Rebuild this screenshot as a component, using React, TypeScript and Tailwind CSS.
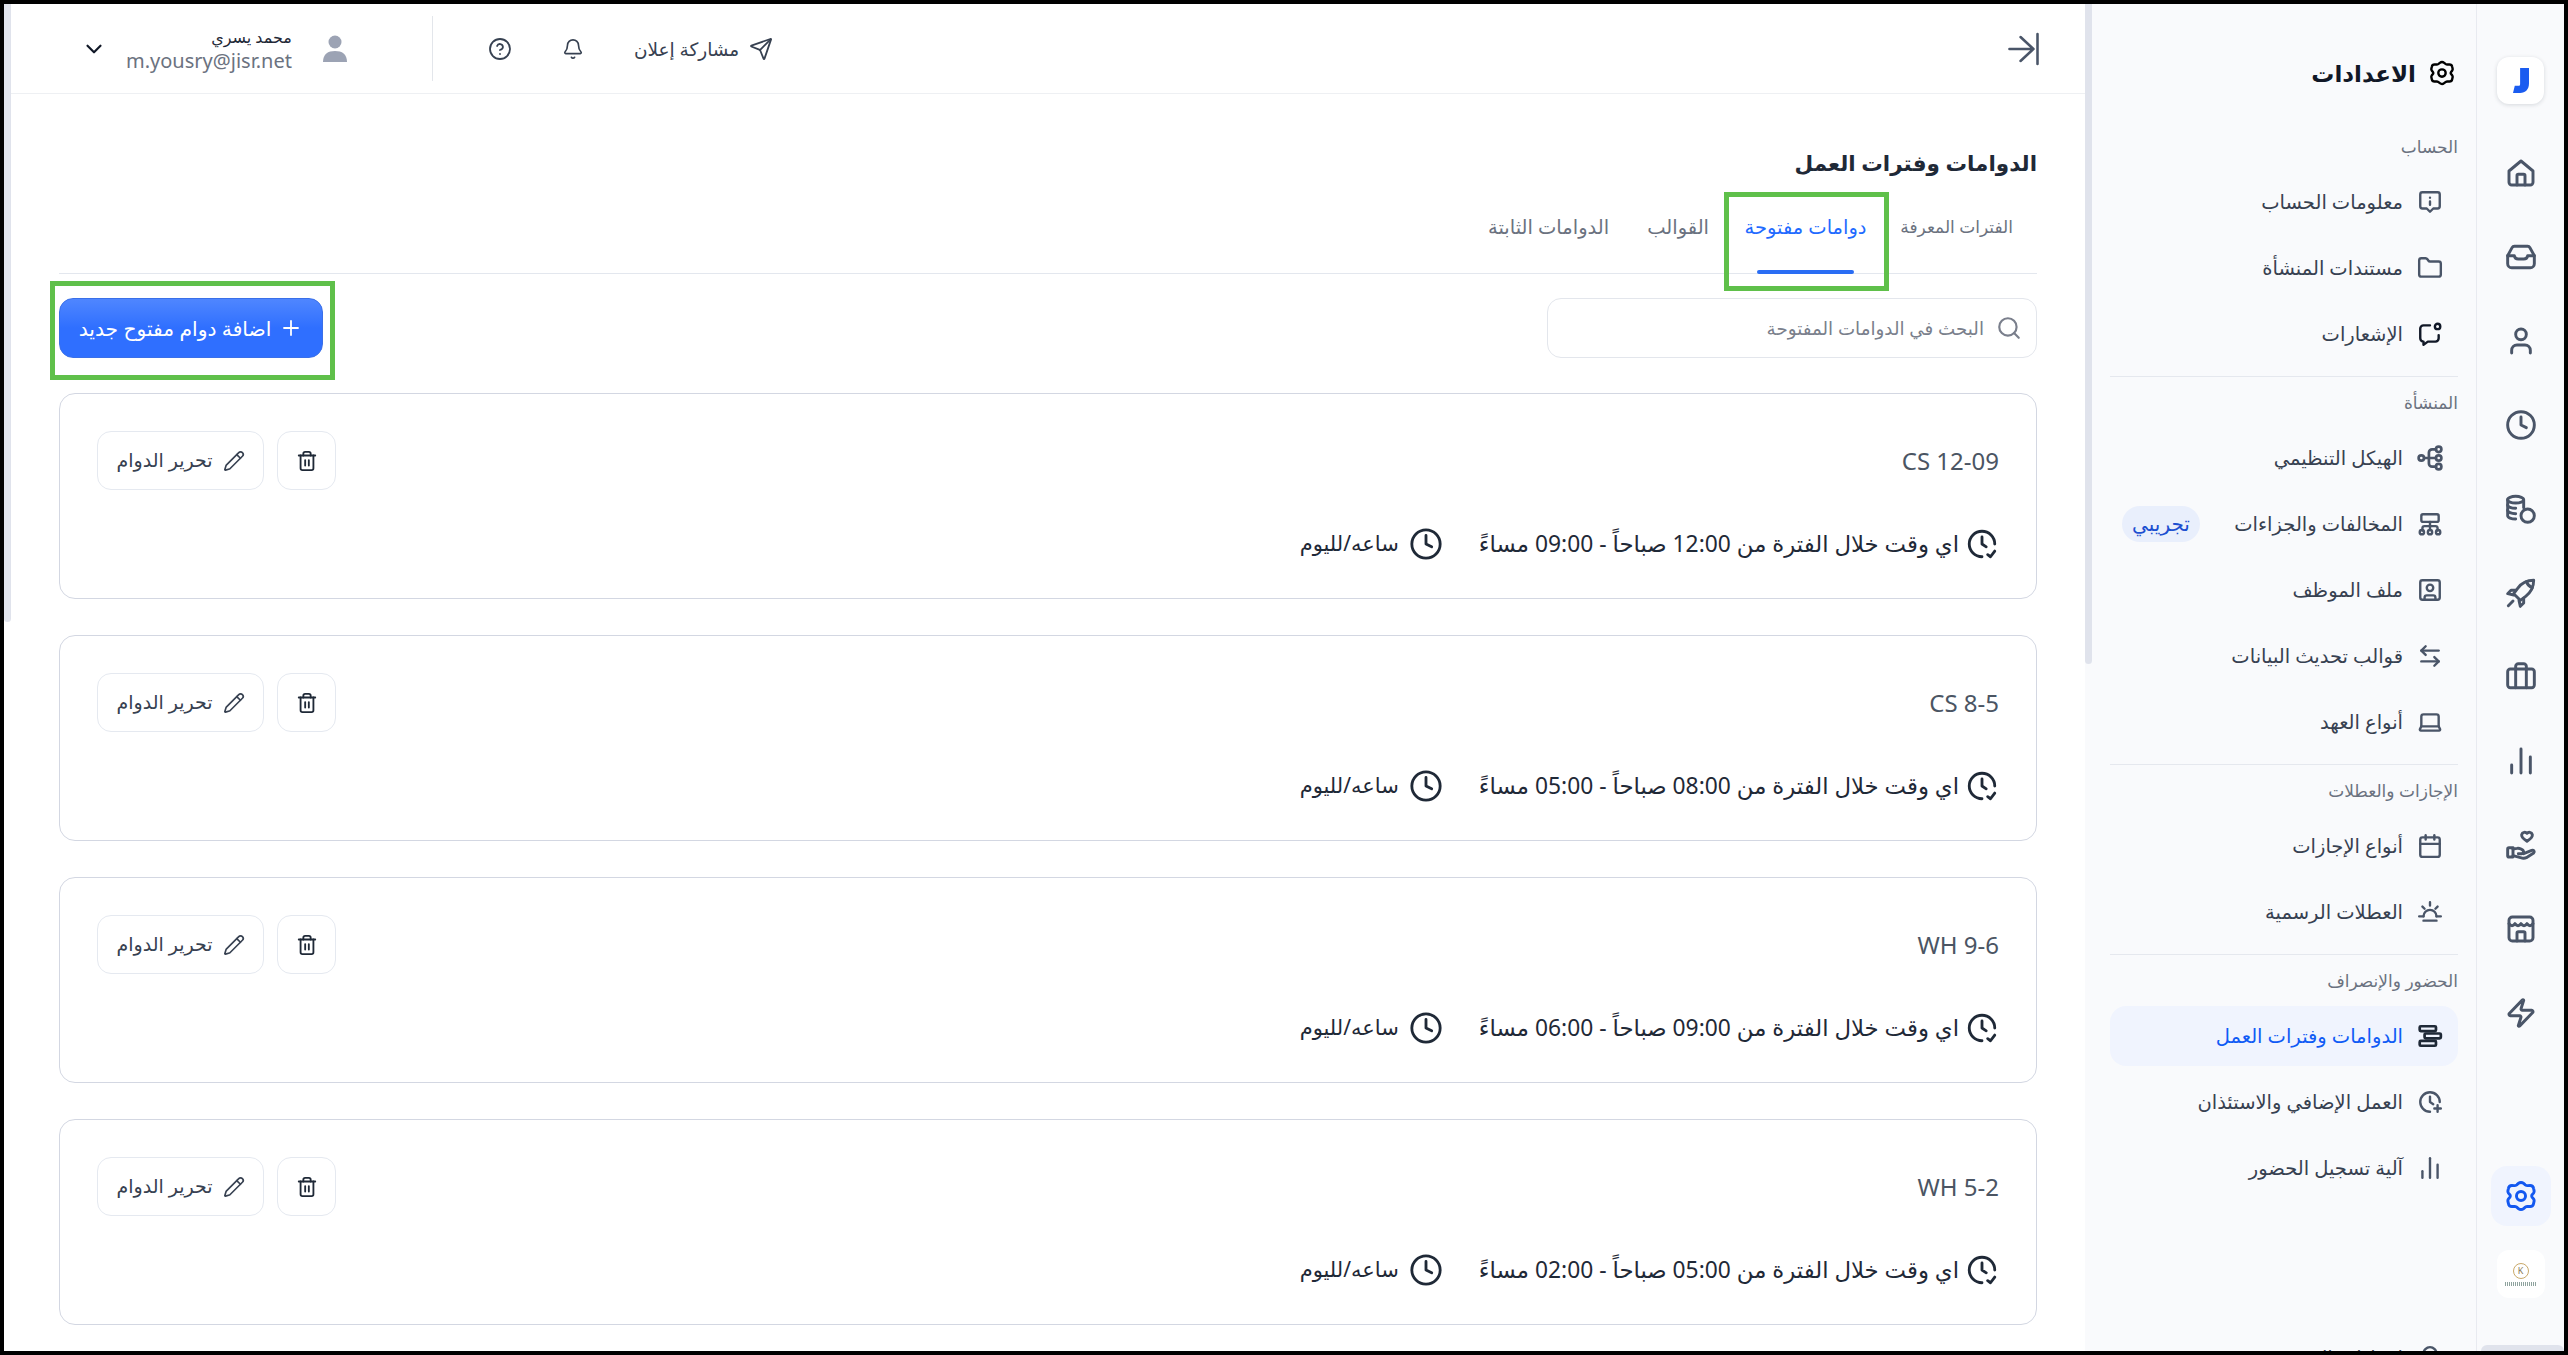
import { Bell, ChevronDown, CircleHelp, Clock, Folder, Briefcase, Laptop, Pencil, Plus, Search, Send, Trash2, User, Zap, ArrowLeftRight, Calendar, ChartNoAxesColumn, SquareUser } from 'lucide-react'
import type { ReactNode } from 'react'

const font = 'font-["Noto_Sans","DejaVu_Sans",sans-serif]'

const shifts = [
  { name: 'CS 12-09', range: 'اي وقت خلال الفترة من 12:00 صباحاً - 09:00 مساءً' },
  { name: 'CS 8-5', range: 'اي وقت خلال الفترة من 08:00 صباحاً - 05:00 مساءً' },
  { name: 'WH 9-6', range: 'اي وقت خلال الفترة من 09:00 صباحاً - 06:00 مساءً' },
  { name: 'WH 5-2', range: 'اي وقت خلال الفترة من 05:00 صباحاً - 02:00 مساءً' },
]

function Svg({ size = 26, width = 2.2, children, className = '' }: { size?: number; width?: number; children: ReactNode; className?: string }) {
  return (
    <svg width={size} height={size} viewBox="0 0 24 24" fill="none" stroke="currentColor" strokeWidth={width} strokeLinecap="round" strokeLinejoin="round" className={className}>
      {children}
    </svg>
  )
}

const GearIcon = ({ size = 32 }: { size?: number }) => (
  <Svg size={size}>
    <path d="M10 2.600Q12 1 14 2.600L15.200 3.600Q16 4.200 17 4.200L18.900 4.100Q21 4.100 21.400 6.200L21.800 8Q22 9 21.400 9.800L20.400 11Q19.700 12 20.400 13L21.400 14.200Q22 15 21.800 16L21.400 17.800Q21 19.900 18.900 19.900L17 19.800Q16 19.800 15.200 20.400L14 21.400Q12 23 10 21.400L8.800 20.400Q8 19.800 7 19.800L5.100 19.900Q3 19.900 2.600 17.800L2.200 16Q2 15 2.600 14.200L3.600 13Q4.300 12 3.600 11L2.600 9.800Q2 9 2.200 8L2.600 6.200Q3 4.100 5.100 4.100L7 4.200Q8 4.200 8.800 3.600Z" />
    <circle cx="12" cy="12" r="3.400" />
  </Svg>
)
const HomeIcon = () => (
  <Svg size={32}><path d="M3 10.5 12 3l9 7.5V19a2 2 0 0 1-2 2H5a2 2 0 0 1-2-2z" /><path d="M9 21v-7a1 1 0 0 1 1-1h4a1 1 0 0 1 1 1v7" /></Svg>
)
const TrayIcon = () => (
  <Svg size={32}><path d="M7 4h10a2 2 0 0 1 1.7 1l3.3 6v6a3 3 0 0 1-3 3H5a3 3 0 0 1-3-3v-6l3.3-6A2 2 0 0 1 7 4z" /><path d="M2 11h5a3 3 0 0 0 3 2.5h4a3 3 0 0 0 3-2.5h5" /></Svg>
)
const CoinsIcon = () => (
  <Svg size={32}><ellipse cx="8" cy="5" rx="6" ry="2.5" /><path d="M2 5v12c0 1.4 2.7 2.5 6 2.5" /><path d="M14 5v6" /><path d="M2 9c0 1.4 2.7 2.5 6 2.5" /><path d="M2 13c0 1.4 2.7 2.5 6 2.5" /><circle cx="17" cy="17" r="5" /></Svg>
)
const RocketIcon = () => (
  <Svg size={32}>
    <path d="M21.500 2.500c-5 0-9 2-12 6l-3 4 5 5 4-3c4-3 6-7 6-12z" />
    <path d="M8 10H4.500L2 12.500l4.500 1M14 16v3.500L11.500 22l-1-4.500" />
    <path d="M16 3.500c.8 2 2.500 3.700 4.500 4.500M6 18l-3.500 3.500" />
  </Svg>
)
const HandHeartIcon = () => (
  <Svg size={32}>
    <path d="M3 14h3v7H3a1 1 0 0 1-1-1v-5a1 1 0 0 1 1-1z" />
    <path d="M6 15l3-.5c1-.2 2 0 3 .5l1.500 1a1.500 1.500 0 0 1-1 2.500H10m4 0 6-2.500c1.500-.5 2.500 1 1.500 2L16 21.500c-1 .5-2 .5-3 .3L6 20" />
    <path d="M16.500 3.200c-1-1.200-3.500-1-4 1-.3 1.500 1 3 4 5 3-2 4.300-3.500 4-5-.5-2-3-2.200-4-1z" />
  </Svg>
)
const StoreIcon = () => (
  <Svg size={32}><rect x="3" y="3" width="18" height="18" rx="2.5" /><path d="M3 8c1.500 2 3 2 4.500 0 1.500 2 3 2 4.500 0 1.500 2 3 2 4.500 0 1.500 2 3 2 4.500 0" /><path d="M9 21v-6a1 1 0 0 1 1-1h4a1 1 0 0 1 1 1v6" /></Svg>
)
const JIcon = () => (
  <svg width="16" height="27" viewBox="0 0 18 28" fill="#1a5cf0"><path d="M8 0h10v17c0 7-4 11-10 11H0l2-8h4c1.500 0 2-.5 2-2z" /></svg>
)
const InfoChatIcon = () => (
  <Svg><path d="M5 3h14a2 2 0 0 1 2 2v11a2 2 0 0 1-2 2h-4l-3 3-3-3H5a2 2 0 0 1-2-2V5a2 2 0 0 1 2-2z" /><path d="M12 8v.01M12 11.500v3" /></Svg>
)
const ChatDotIcon = () => (
  <Svg className="text-[#111827]"><path d="M12 4H6a3 3 0 0 0-3 3v9a3 3 0 0 0 3 3v3l4-3h7a3 3 0 0 0 3-3v-3" /><circle cx="19" cy="5" r="2.500" /></Svg>
)
const OrgIcon = () => (
  <Svg width={2.5}><circle cx="4" cy="12" r="2.500" /><circle cx="20" cy="4" r="2.500" /><circle cx="20" cy="12" r="2.500" /><circle cx="20" cy="20" r="2.500" /><path d="M6.500 12h11M11 12V7a3 3 0 0 1 3-3h3.500M11 12v5a3 3 0 0 0 3 3h3.500" /></Svg>
)
const TreeIcon = () => (
  <Svg><rect x="4" y="3" width="16" height="7" rx="1.500" /><path d="M12 10v7M5 18v-2a2 2 0 0 1 2-2h10a2 2 0 0 1 2 2v2" /><circle cx="4.500" cy="19.500" r="2" /><circle cx="12" cy="19.500" r="2" /><circle cx="19.500" cy="19.500" r="2" /></Svg>
)
const SunsetIcon = () => (
  <Svg><path d="M6 16a6 6 0 0 1 12 0" /><path d="M2 16h4m12 0h4M6 20h12M12 3v3M5 7l2 2M19 7l-2 2" /></Svg>
)
const ShiftsIcon = () => (
  <Svg width={2.5}><rect x="2.500" y="3" width="15" height="4.500" rx="1" /><rect x="7" y="9.700" width="15" height="4.500" rx="1" /><rect x="2.500" y="16.500" width="15" height="4.500" rx="1" /></Svg>
)
const ClockPlusIcon = () => (
  <Svg><path d="M21 12a9 9 0 1 0-9 9" /><path d="M12 7v5l3 2M19 15v6M16 18h6" /></Svg>
)
const ClockCheckIcon = () => (
  <Svg size={34} width={2}><path d="M12 21a9 9 0 1 1 9-9" /><path d="M12 7v5l3 2M16 19.500l2 1.500 3-4" /></Svg>
)
const CollapseIcon = () => (
  <Svg size={36} width={1.7} className="text-[#4a5568]"><path d="M2.300 12h16M9.700 4l8.600 8-8.600 8M21 2v20" /></Svg>
)

function RailIcon({ children }: { children: ReactNode }) {
  return <div className="flex h-[84px] items-center justify-center text-[#4a5568]">{children}</div>
}

function Rail() {
  return (
    <aside className="flex w-[88px] shrink-0 flex-col items-center border-l border-[#e8eaf0] bg-[#f9fafc]">
      <div className="mt-[53px] mb-[27px] flex size-[47px] items-center justify-center rounded-xl bg-white shadow-[0_1px_4px_rgba(16,24,40,0.15)]">
        <JIcon />
      </div>
      <div className="flex w-full flex-col">
        <RailIcon><HomeIcon /></RailIcon>
        <RailIcon><TrayIcon /></RailIcon>
        <RailIcon><User size={32} strokeWidth={2.2} /></RailIcon>
        <RailIcon><Clock size={32} strokeWidth={2.2} /></RailIcon>
        <RailIcon><CoinsIcon /></RailIcon>
        <RailIcon><RocketIcon /></RailIcon>
        <RailIcon><Briefcase size={32} strokeWidth={2.2} /></RailIcon>
        <RailIcon><ChartNoAxesColumn size={32} strokeWidth={2.2} /></RailIcon>
        <RailIcon><HandHeartIcon /></RailIcon>
        <RailIcon><StoreIcon /></RailIcon>
        <RailIcon><Zap size={32} strokeWidth={2.2} /></RailIcon>
      </div>
      <div className="mt-[111px] flex size-[60px] items-center justify-center rounded-2xl bg-[#f0f4fe] text-[#1358f0]">
        <GearIcon />
      </div>
      <div className="mt-6 flex size-[48px] flex-col items-center justify-center rounded-xl bg-white">
        <div className="flex size-[16px] items-center justify-center rounded-full border border-[#c9a96a] text-[9px] text-[#8a7a55]">K</div>
        <div className="mt-[3px] h-[4px] w-[32px] bg-[repeating-linear-gradient(90deg,#8fa39e_0,#8fa39e_1px,transparent_1px,transparent_2px)]" />
      </div>
      <div className="mt-auto h-[6px] w-[83px] self-start rounded-t-md bg-[#e0e3ec]" />
    </aside>
  )
}

function NavItem({ icon, label, active, badge }: { icon: ReactNode; label: string; active?: boolean; badge?: string }) {
  return (
    <div className={`flex h-[60px] shrink-0 items-center gap-[13px] rounded-2xl pr-[14px] pl-[12px] text-[19.500px] ${active ? 'bg-[#f0f4fe] text-[#0f5bf5]' : 'text-[#374151]'}`}>
      <span className={`flex size-[28px] items-center justify-center ${active ? 'text-[#1f2937]' : 'text-[#4a5568]'}`}>{icon}</span>
      <span className="flex-1">{label}</span>
      {badge && <span className="flex h-[36px] w-[78px] items-center justify-center rounded-full bg-[#e9effc] text-[20px] text-[#1d4fd0]">{badge}</span>}
    </div>
  )
}

function SectionLabel({ children }: { children: ReactNode }) {
  return <div className="mb-[13px] h-6 shrink-0 text-[17px] leading-6 text-[#6b7280]">{children}</div>
}

function Divider() {
  return <div className="mt-[12px] mb-[14px] h-px shrink-0 bg-[#e5e8ee]" />
}

function SettingsPanel() {
  return (
    <aside className="flex w-[384px] shrink-0 flex-col overflow-hidden bg-[#f9fafc] px-[18px]">
      <div className="mt-[51px] mb-[44px] flex h-9 shrink-0 items-center gap-[13px] pr-[3px]">
        <GearIcon size={26} />
        <span className="text-[23px] leading-9 font-semibold text-[#111827]">الاعدادات</span>
      </div>
      <SectionLabel>الحساب</SectionLabel>
      <div className="flex flex-col gap-[6px]">
        <NavItem icon={<InfoChatIcon />} label="معلومات الحساب" />
        <NavItem icon={<Folder size={26} strokeWidth={2.2} />} label="مستندات المنشأة" />
        <NavItem icon={<ChatDotIcon />} label="الإشعارات" />
      </div>
      <Divider />
      <SectionLabel>المنشأة</SectionLabel>
      <div className="flex flex-col gap-[6px]">
        <NavItem icon={<OrgIcon />} label="الهيكل التنظيمي" />
        <NavItem icon={<TreeIcon />} label="المخالفات والجزاءات" badge="تجريبي" />
        <NavItem icon={<SquareUser size={26} strokeWidth={2.2} />} label="ملف الموظف" />
        <NavItem icon={<ArrowLeftRight size={26} strokeWidth={2.2} />} label="قوالب تحديث البيانات" />
        <NavItem icon={<Laptop size={26} strokeWidth={2.2} />} label="أنواع العهد" />
      </div>
      <Divider />
      <SectionLabel>الإجازات والعطلات</SectionLabel>
      <div className="flex flex-col gap-[6px]">
        <NavItem icon={<Calendar size={26} strokeWidth={2.2} />} label="أنواع الإجازات" />
        <NavItem icon={<SunsetIcon />} label="العطلات الرسمية" />
      </div>
      <Divider />
      <SectionLabel>الحضور والإنصراف</SectionLabel>
      <div className="flex flex-col gap-[6px]">
        <NavItem icon={<ShiftsIcon />} label="الدوامات وفترات العمل" active />
        <NavItem icon={<ClockPlusIcon />} label="العمل الإضافي والاستئذان" />
        <NavItem icon={<ChartNoAxesColumn size={26} strokeWidth={2.2} />} label="آلية تسجيل الحضور" />
      </div>
      <div className="mt-[130px]">
        <NavItem icon={<Bell size={26} strokeWidth={2.2} />} label="إعدادات الحضور" />
      </div>
    </aside>
  )
}

function Header() {
  return (
    <header className="flex h-[90px] shrink-0 items-center justify-between border-b border-[#eef0f3] pr-[43px] pl-[70px]">
      <CollapseIcon />
      <div className="flex items-center">
        <div className="flex items-center gap-[10px] text-[#374151]">
          <Send size={24} strokeWidth={1.8} />
          <span className="text-[18.500px]">مشاركة إعلان</span>
        </div>
        <Bell size={22} strokeWidth={1.8} className="mr-[50px] text-[#374151]" />
        <CircleHelp size={24} strokeWidth={1.8} className="mr-[50px] text-[#374151]" />
        <div className="mr-[55px] h-[65px] w-px bg-[#e3e6eb]" />
        <div className="mr-[84px] flex items-center">
          <svg width="26" height="28" viewBox="0 0 26 28" fill="#9ca3b4"><circle cx="13" cy="7" r="6.500" /><path d="M1 27c0-8 5-11 12-11s12 3 12 11z" /></svg>
          <div className="mr-[30px] flex flex-col">
            <span className="text-[16px] leading-6 font-medium text-[#1f2937]">محمد يسري</span>
            <span className="text-[20px] leading-6 text-[#6b7280]" dir="ltr">m.yousry@jisr.net</span>
          </div>
          <ChevronDown size={26} strokeWidth={2} className="mr-[19px] text-[#111827]" />
        </div>
      </div>
    </header>
  )
}

function Tabs() {
  return (
    <div className="mt-[25px] flex h-[68px] items-start border-b border-[#e3e7ee] pr-[24px] text-[19.500px] leading-8 text-[#6b7280]">
      <div className="w-[108px] pt-[5px] text-[17px] whitespace-nowrap">الفترات المعرفة</div>
      <div className="relative mr-[38px] w-[123px] pt-[5px] text-center whitespace-nowrap text-[#1f6bff]">
        دوامات مفتوحة
        <div className="absolute right-[13px] -bottom-[31px] left-[13px] h-[4px] rounded-full bg-[#2a6df4]" />
        <div className="absolute -top-[14px] -right-[22px] -bottom-[48px] -left-[20px] border-[5px] border-[#5fc04a]" />
      </div>
      <div className="mr-[35px] pt-[5px]">القوالب</div>
      <div className="mr-[38px] pt-[5px]">الدوامات الثابتة</div>
    </div>
  )
}

function ShiftCard({ name, range }: { name: string; range: string }) {
  return (
    <div className="flex h-[206px] shrink-0 flex-col rounded-2xl border border-[#d3d7e2] bg-white pt-[37px] pr-[37px] pb-[37px] pl-[37px]">
      <div className="flex items-center justify-between">
        <span className="text-[24px] text-[#4b5563]" dir="ltr">{name}</span>
        <div className="flex items-center gap-[13px]">
          <button className="flex size-[59px] items-center justify-center rounded-[14px] border border-[#e5e9f0] text-[#1f2937]">
            <Trash2 size={22} strokeWidth={2} />
          </button>
          <button className="flex h-[59px] w-[167px] items-center justify-center gap-[10px] rounded-[14px] border border-[#e5e9f0] text-[19px] text-[#374151]">
            <Pencil size={22} strokeWidth={1.8} />
            <span>تحرير الدوام</span>
          </button>
        </div>
      </div>
      <div className="mt-auto flex items-center gap-[36px] text-[#1f2937]">
        <div className="flex items-center gap-[6px] text-[22.800px]">
          <ClockCheckIcon />
          <span>{range}</span>
        </div>
        <div className="flex items-center gap-[10px] text-[21px]">
          <Clock size={34} strokeWidth={2} />
          <span>ساعه/لليوم</span>
        </div>
      </div>
    </div>
  )
}

export default function App() {
  return (
    <div dir="rtl" className={`flex h-[1355px] w-[2568px] overflow-hidden border-4 border-black bg-white ${font}`}>
      <Rail />
      <SettingsPanel />
      <div className="w-[7px] shrink-0 bg-[#f9fafc]">
        <div className="h-[660px] rounded-b bg-[#e0e3ec]" />
      </div>
      <main className="flex min-w-0 flex-1 flex-col overflow-hidden">
        <Header />
        <div className="flex min-h-0 flex-1 flex-col pr-[48px] pl-[48px]">
          <h1 className="mt-[51px] text-[21.500px] leading-9 font-semibold text-[#1f2937]">الدوامات وفترات العمل</h1>
          <Tabs />
          <div className="mt-[24px] flex items-center justify-between">
            <div className="flex h-[60px] w-[490px] items-center gap-[12px] rounded-[14px] border border-[#e3e6ec] pr-[14px] text-[18.300px] text-[#7a7f8c]">
              <Search size={26} strokeWidth={2} />
              <span>البحث في الدوامات المفتوحة</span>
            </div>
            <div className="relative">
              <div className="absolute -top-[17px] -right-[12px] -bottom-[22px] -left-[9px] border-[5px] border-[#5fc04a]" />
              <button className="flex h-[60px] w-[264px] items-center justify-center gap-[8px] rounded-[14px] border border-[#3a6fe8] bg-gradient-to-b from-[#4f86ff] via-[#2f6fff] to-[#2f6fff] text-[20.300px] font-medium text-white">
                <Plus size={24} strokeWidth={1.8} />
                <span>اضافة دوام مفتوح جديد</span>
              </button>
            </div>
          </div>
          <div className="mt-[35px] flex flex-col gap-[36px]">
            {shifts.map((s) => (
              <ShiftCard key={s.name} name={s.name} range={s.range} />
            ))}
          </div>
        </div>
      </main>
      <div className="w-[7px] shrink-0">
        <div className="h-[618px] rounded-b bg-[#e0e3ec]" />
      </div>
    </div>
  )
}
